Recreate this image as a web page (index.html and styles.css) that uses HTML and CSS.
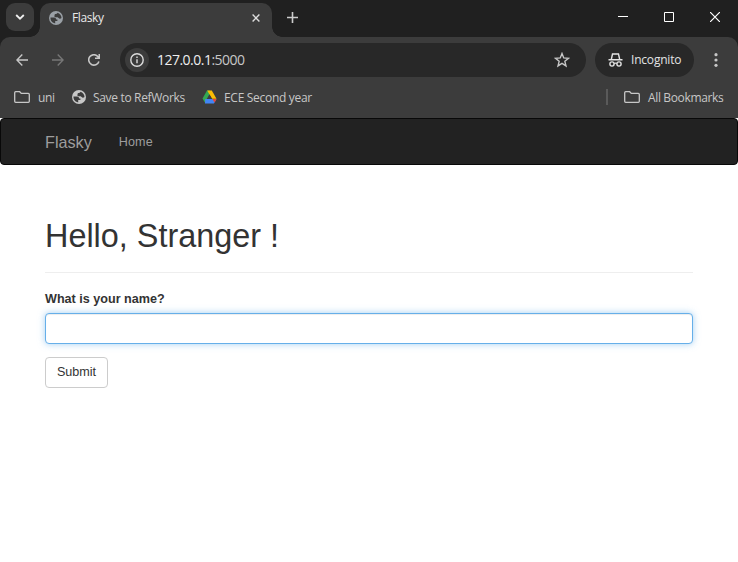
FILE: index.html
```html
<!DOCTYPE html>
<html lang="en">
<head>
<meta charset="utf-8">
<title>Flasky</title>
<link rel="stylesheet" href="styles.css">
</head>
<body>
<svg width="0" height="0" class="defs">
  <symbol id="globe" viewBox="0 0 14 14"><circle cx="7" cy="7" r="7" fill="currentColor"/><path class="cut" d="M1.500 6.600h3.200c1.500 0 2.500.8 2.500 2h1.200v1.500H6.200v2.300C3.400 12.200 1.300 9.700 1.500 6.600zM8.400 1.700c2.400.6 4.100 2.800 4.100 5.300-.9 1-2.200 1-2.900.1-.5-.6-.7-.8-1.500-.8H5.500V4.200c0-.9.600-1.300 1.500-1.300.8 0 1.400-.5 1.400-1.200z"/></symbol>
  <symbol id="folder" viewBox="0 0 16 12"><path d="M.7 1.700q0-1 1-1h4l1.600 1.700h7q1 0 1 1v6.900q0 1-1 1H1.700q-1 0-1-1z" fill="none" stroke="currentColor" stroke-width="1.300"/></symbol>
</svg>
<header class="browser">
  <div class="tabs">
    <div class="search"><svg width="10" height="6" viewBox="0 0 10 6"><path d="M1.200 1 5 4.700 8.800 1" class="line bold"/></svg></div>
    <div class="tab"><svg class="globe" width="14" height="14"><use href="#globe"/></svg><span>Flasky</span><svg class="close" width="8" height="8" viewBox="0 0 8 8"><path d="m.6.600 6.800 6.800m0-6.800L.6 7.400" class="line thin"/></svg></div>
    <svg class="plus" width="11" height="11" viewBox="0 0 11 11"><path d="M5.500 0v11M0 5.500h11" class="line"/></svg>
    <div class="window">
      <svg width="10" height="10"><path d="M0 4.500h10" stroke="#fff"/></svg>
      <svg width="10" height="10"><path d="M.5.500h9v9h-9z" fill="none" stroke="#fff"/></svg>
      <svg width="10" height="10"><path d="m0 0 10 10M10 0 0 10" stroke="#fff" stroke-width="1.200"/></svg>
    </div>
  </div>
  <div class="toolbar">
    <svg class="nav" width="12" height="12" viewBox="0 0 12 12"><path d="M12 6H1M6.300.600.900 6l5.400 5.400" class="line thin"/></svg>
    <svg class="nav off" width="12" height="12" viewBox="0 0 12 12"><path d="M0 6h11M5.700.600 11.100 6l-5.400 5.400" class="line thin"/></svg>
    <svg class="nav" width="12" height="12" viewBox="0 0 12 12"><path d="M10.900 7.400A5.200 5.200 0 1 1 10 2.700L11.200 4M11.300 0v4.200H7" class="line"/></svg>
    <div class="address">
      <div class="info"><svg width="14" height="14" viewBox="0 0 14 14"><circle cx="7" cy="7" r="6.200" class="line thin"/><path d="M7 6.200v4M7 3.500v1.500" class="line thin"/></svg></div>
      <span class="url"><b>127.0.0.1</b>:5000</span>
      <svg class="star" width="16" height="16" viewBox="0 0 16 16"><path d="m8 1.500 1.750 4.400 4.750.350-3.650 3.050 1.150 4.650L8 11.450l-4 2.500 1.150-4.650L1.500 6.250l4.750-.350z" class="line thin"/></svg>
    </div>
    <div class="incognito"><svg width="15" height="14" viewBox="0 0 15 14"><path d="M.5 6.700h14M3.300 6.500 4.500 1h6l1.200 5.500M6.200 10.500q1.300-.8 2.600 0" class="line thin"/><circle cx="4" cy="11" r="2.100" class="line thin"/><circle cx="11" cy="11" r="2.100" class="line thin"/></svg><span>Incognito</span></div>
    <svg class="menu" width="4" height="14" viewBox="0 0 4 14"><g fill="currentColor"><circle cx="2" cy="1.700" r="1.600"/><circle cx="2" cy="7" r="1.600"/><circle cx="2" cy="12.300" r="1.600"/></g></svg>
  </div>
  <div class="bookmarks">
    <svg class="folder" width="16" height="12"><use href="#folder"/></svg><span class="uni">uni</span>
    <svg class="globe2" width="14" height="14"><use href="#globe"/></svg><span class="save">Save to RefWorks</span>
    <svg class="drive" width="15" height="14" viewBox="0 0 15 14"><path fill="#34a853" d="M5 .5h2.700L9 2.800 3.200 13 .5 8.500z"/><path fill="#fbbc04" d="M5.200.500h4.600l4.700 8.300H10z"/><path fill="#4285f4" d="M3.200 9h11.300l-2.500 4.500H3z"/><path fill="#ea4335" d="M10.400 9h4.100L12.600 12.500z"/><path fill="#3c3c3c" d="m7.400 4.300 2.600 4.600H4.800z"/></svg><span class="ece">ECE Second year</span>
    <i class="divider"></i><svg class="folder" width="16" height="12"><use href="#folder"/></svg><span class="all">All Bookmarks</span>
  </div>
</header>
<nav class="navbar"><a class="brand">Flasky</a><a class="home">Home</a></nav>
<main class="container">
  <h1>Hello, Stranger !</h1>
  <form>
    <label for="name">What is your name?</label>
    <input id="name" type="text">
    <button type="button">Submit</button>
  </form>
</main>
</body>
</html>
```
FILE: styles.css
```css
* { box-sizing: border-box; }
body { margin: 0; background: #fff; color: #333; font-family: "Liberation Sans", Arial, sans-serif; font-size: 12.6px; height: 562px; overflow: hidden; }
svg { flex: none; display: block; }
.defs { position: absolute; }
.cut { fill: #3c3c3c; }
.line { fill: none; stroke: currentColor; stroke-width: 1.6; }
.thin { stroke-width: 1.4; }
.bold { stroke-width: 1.8; }
.browser { height: 118px; background: #202020; color: #c7c7c7; font-family: "Open Sans", "Noto Sans", sans-serif; font-size: 12px; white-space: nowrap; }
.tabs { display: flex; height: 37px; align-items: flex-start; }
.search { width: 28px; height: 28px; margin: 3px 6px 0; border-radius: 9px; background: #3c3c3c; color: #eee; display: grid; place-items: center; }
.tab { position: relative; width: 232px; height: 34px; margin-top: 3px; padding: 0 12px 5px 9px; border-radius: 10px 10px 0 0; background: #3c3c3c; color: #e8e8e8; display: flex; align-items: center; }
.tab::before, .tab::after { content: ""; position: absolute; bottom: 0; width: 10px; height: 10px; }
.tab::before { left: -10px; background: radial-gradient(circle at 0 0, transparent 9.500px, #3c3c3c 10px); }
.tab::after { right: -10px; background: radial-gradient(circle at 100% 0, transparent 9.500px, #3c3c3c 10px); }
.globe { color: #9aa0a6; }
.tab span { margin-left: 9px; letter-spacing: -.4px; }
.close { margin-left: auto; color: #ddd; }
.plus { margin: 12px 0 0 15px; color: #ccc; }
.window { display: flex; gap: 36px; margin: 12px 18px 0 auto; }
.toolbar { display: flex; align-items: center; height: 46px; padding-left: 16px; background: #3c3c3c; border-radius: 10px 10px 0 0; }
.nav { margin-right: 24px; }
.off { color: #777; }
.address { display: flex; align-items: center; width: 466px; height: 34px; padding: 0 16px 0 5px; margin-left: -4px; border-radius: 17px; background: #282828; }
.info { width: 24px; height: 24px; display: grid; place-items: center; border-radius: 50%; background: #3c3c3c; color: #ddd; }
.url { margin-left: 8px; padding-bottom: 2px; font-size: 14px; letter-spacing: -.52px; }
.url b { color: #eee; font-weight: 400; }
.star { margin-left: auto; }
.incognito { width: 99px; height: 34px; margin-left: 9px; padding-left: 13px; display: flex; align-items: center; gap: 8px; border-radius: 17px; background: #282828; color: #e3e3e3; }
.incognito span { padding-bottom: 1px; letter-spacing: -.2px; }
.menu { margin-left: 20px; }
.bookmarks { display: flex; align-items: center; height: 35px; padding: 0 15px 7px 14px; background: #3c3c3c; }
.folder { margin-right: 8px; }
.uni { width: 34px; letter-spacing: -.3px; }
.globe2 { margin-right: 7px; }
.save { width: 109px; letter-spacing: -.33px; }
.drive { margin-right: 7px; }
.ece { letter-spacing: -.3px; }
.all { width: 75px; letter-spacing: -.36px; }
.divider { width: 2px; height: 16px; margin: 0 16px 0 auto; background: #5a5a5a; }
.navbar { display: flex; align-items: center; height: 47px; padding-left: 44px; border: 1px solid #080808; border-radius: 4px; background: #222; color: #9d9d9d; }
.brand { padding-top: 2px; font-size: 16.2px; }
.home { margin-left: 27px; letter-spacing: .1px; }
.container { padding: 51px 45px 0; }
h1 { margin: 0; height: 57px; border-bottom: 1px solid #eee; font-size: 32.4px; line-height: 41px; font-weight: 400; }
label { display: block; margin-top: 18px; margin-bottom: 5px; height: 17px; line-height: 17px; font-weight: 700; }
input { display: block; width: 100%; height: 31px; border: 1px solid #66afe9; border-radius: 4px; outline: 0; box-shadow: inset 0 1px 1px rgba(0,0,0,.075), 0 0 7px rgba(102,175,233,.6); }
button { display: block; width: 63px; height: 31px; margin-top: 13px; padding: 0 0 1px; border: 1px solid #ccc; border-radius: 4px; background: #fff; color: #333; font: inherit; }
```
